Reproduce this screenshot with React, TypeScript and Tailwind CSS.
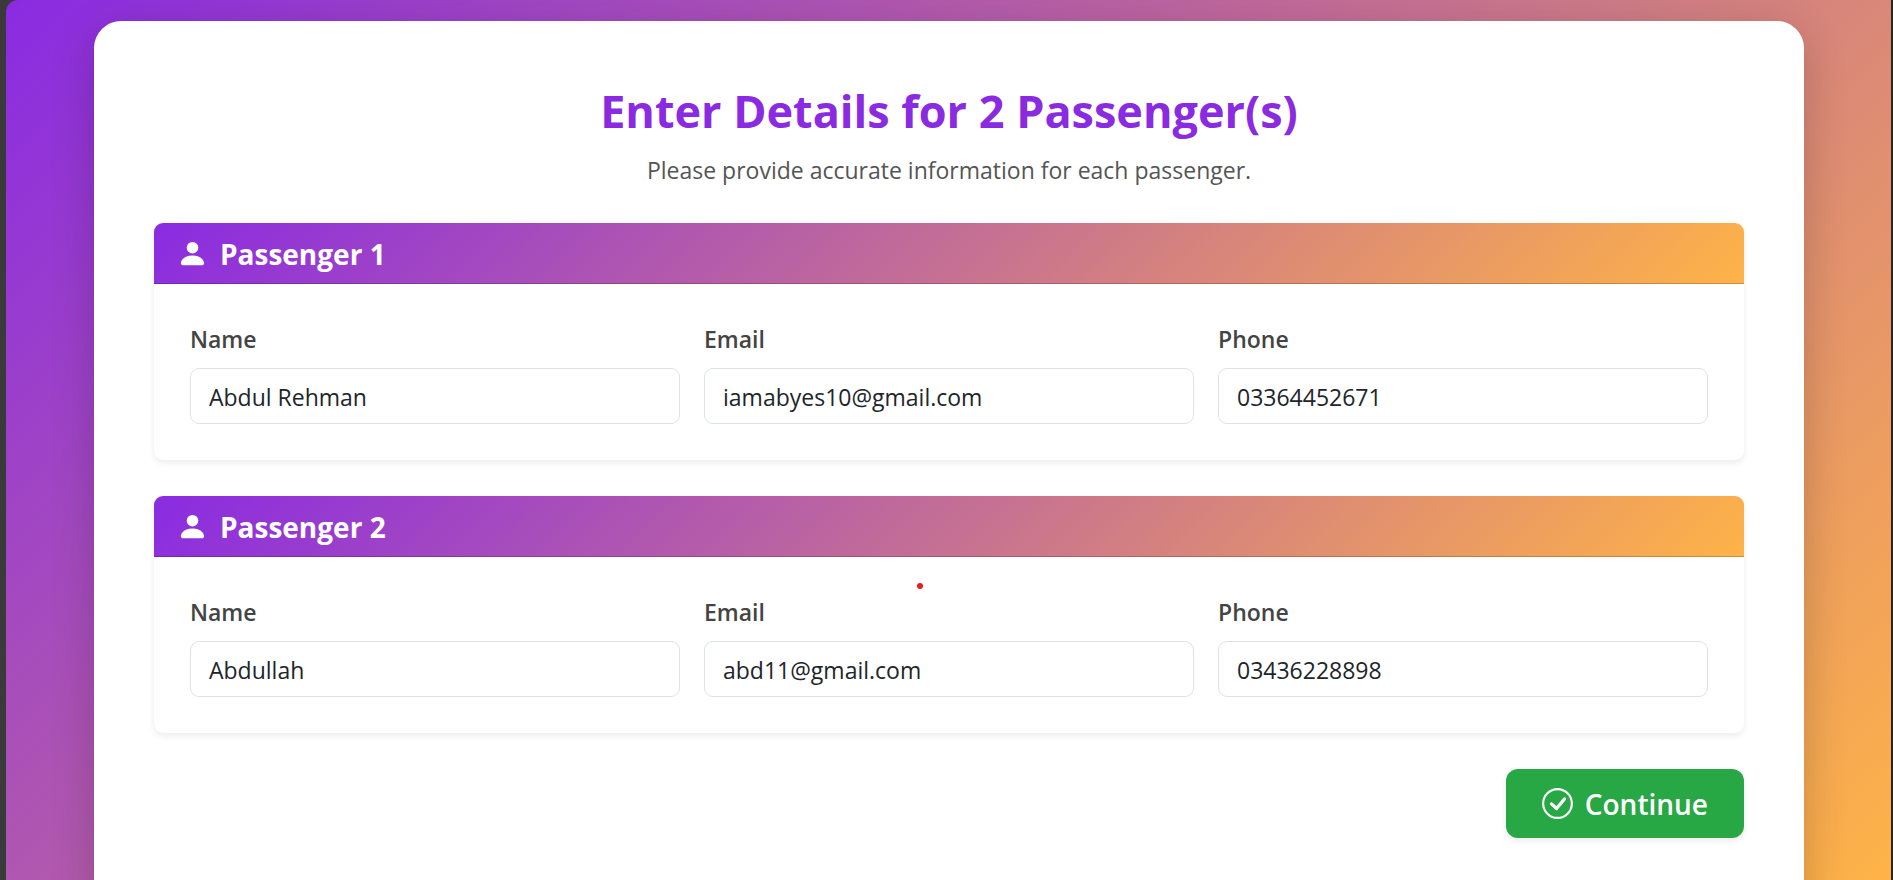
import React from "react";
import { BsPersonFill } from "react-icons/bs";

type Passenger = { name: string; email: string; phone: string };

const passengers: Passenger[] = [
  { name: "Abdul Rehman", email: "iamabyes10@gmail.com", phone: "03364452671" },
  { name: "Abdullah", email: "abd11@gmail.com", phone: "03436228898" },
];

const brandGradient = "bg-[linear-gradient(135deg,#8a2be2,#ffb347)]";

function CheckCircleIcon() {
  return (
    <svg viewBox="0 0 16 16" fill="none" stroke="currentColor" className="size-[31px] shrink-0" aria-hidden="true">
      <circle cx="8" cy="8" r="7.4" strokeWidth="1.1" />
      <path d="M4.9 8.2 7.5 10.6 11.6 5.7" strokeWidth="1.7" strokeLinecap="round" strokeLinejoin="round" />
    </svg>
  );
}

type FieldProps = { id: string; label: string; type: string; value: string };

function Field({ id, label, type, value }: FieldProps) {
  return (
    <div className="flex min-w-0 flex-col gap-[11px]">
      <label htmlFor={id} className="pt-px text-[23px] leading-9 font-semibold text-[#444444]">
        {label}
      </label>
      <input
        id={id}
        type={type}
        defaultValue={value}
        className="h-14 w-full rounded-[9px] border border-[#dee2e6] bg-white px-[18px] pt-0.5 text-[23px] text-[#212529] outline-none"
      />
    </div>
  );
}

function PassengerCard({ index, passenger }: { index: number; passenger: Passenger }) {
  return (
    <section className="overflow-hidden rounded-[9px] bg-white shadow-[0_3px_6px_rgba(0,0,0,0.075)]">
      <h2
        className={`flex items-center gap-3 border-b border-black/20 bg-origin-border px-[23px] py-3 text-[28px] leading-9 font-bold text-white ${brandGradient}`}
      >
        <BsPersonFill className="size-[31px] shrink-0" aria-hidden="true" />
        <span className="pt-0.5 leading-[34px]">Passenger {index}</span>
      </h2>
      <div className="grid grid-cols-3 gap-6 p-9">
        <Field id={`name-${index}`} label="Name" type="text" value={passenger.name} />
        <Field id={`email-${index}`} label="Email" type="email" value={passenger.email} />
        <Field id={`phone-${index}`} label="Phone" type="tel" value={passenger.phone} />
      </div>
    </section>
  );
}

export default function App() {
  return (
    <div className="relative h-screen overflow-hidden border-r-2 border-[#262626] bg-[#3a3a3a] pl-1.5 font-['Open_Sans',sans-serif]">
      <div className={`h-full overflow-hidden rounded-tl-xl pr-[87px] pl-22 pt-[21px] ${brandGradient}`}>
        <main className="rounded-[27px] bg-white px-15 pt-15 pb-24 shadow-[0_12px_45px_rgba(0,0,0,0.2)]">
          <header className="pb-[35px] text-center">
            <h1 className="text-[45px] leading-[60px] font-bold text-[#8a2be2]">
              Enter Details for 2 Passenger(s)
            </h1>
            <p className="pt-[11px] text-[23px] leading-9 text-[#555555]">
              Please provide accurate information for each passenger.
            </p>
          </header>
          <form className="flex flex-col gap-9" onSubmit={(e) => e.preventDefault()}>
            {passengers.map((p, i) => (
              <PassengerCard key={p.email} index={i + 1} passenger={p} />
            ))}
            <button
              type="submit"
              className="flex h-[69px] items-center gap-3 self-end rounded-xl bg-[#28a745] px-9 text-[28px] font-semibold text-white shadow-[0_3px_6px_rgba(0,0,0,0.075)]"
            >
              <CheckCircleIcon />
              Continue
            </button>
          </form>
        </main>
      </div>
      <span className="absolute top-[583px] left-[917px] size-1.5 rounded-full bg-[#e81c1c]" />
    </div>
  );
}
